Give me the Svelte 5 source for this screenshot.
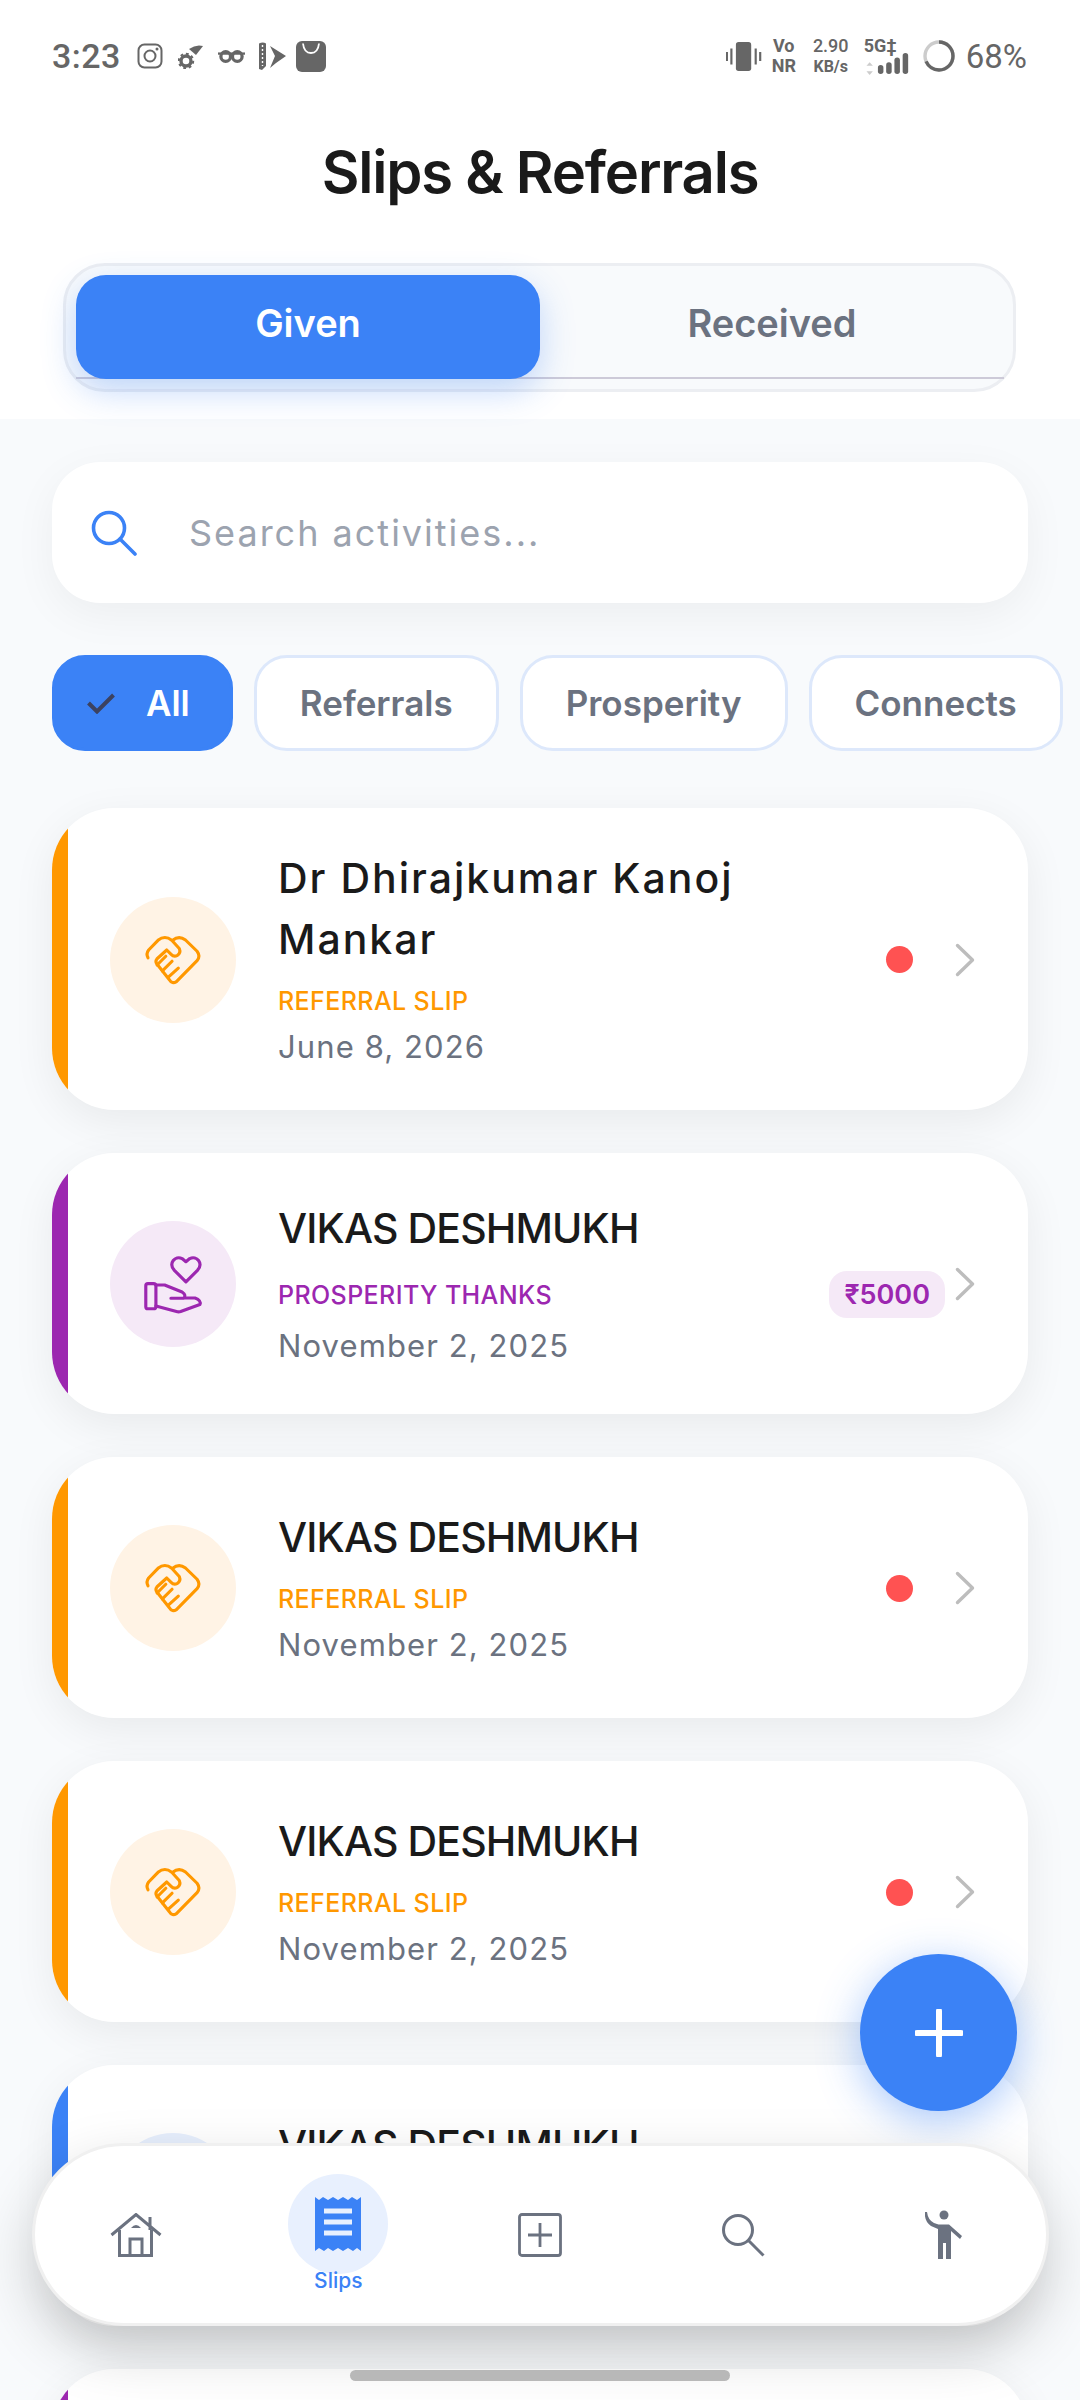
<script>
  const chips = ['Referrals', 'Prosperity', 'Connects'];
  const cards = [
    { name: 'Dr Dhirajkumar Kanoj Mankar', type: 'REFERRAL SLIP', date: 'June 8, 2026', kind: 'ref', mixed: true },
    { name: 'VIKAS DESHMUKH', type: 'PROSPERITY THANKS', date: 'November 2, 2025', kind: 'pro', amount: '₹5000' },
    { name: 'VIKAS DESHMUKH', type: 'REFERRAL SLIP', date: 'November 2, 2025', kind: 'ref' },
    { name: 'VIKAS DESHMUKH', type: 'REFERRAL SLIP', date: 'November 2, 2025', kind: 'ref' },
    { name: 'VIKAS DESHMUKH', type: 'CONNECT', date: 'November 2, 2025', kind: 'con' },
    { name: '', type: '', date: '', kind: 'pro' }
  ];
</script>

<div class="screen">
  <header class="head">
    <div class="status">
      <div class="st-left">
        <span class="time">3:23</span>
        <svg class="s-insta" viewBox="0 0 26 26"><rect x="1.500" y="1.500" width="23" height="23" rx="6" fill="none" stroke="#666" stroke-width="2"/><circle cx="13" cy="13" r="5.500" fill="none" stroke="#666" stroke-width="2"/><circle cx="20" cy="6" r="1.500" fill="#666"/></svg>
        <svg class="s-gear" viewBox="0 0 26 26"><path d="M11 6 Q18 1 25 3 L18 12 Z" fill="#666"/><circle cx="8" cy="18" r="5" fill="none" stroke="#666" stroke-width="3.400"/><circle cx="8" cy="18" r="7.200" fill="none" stroke="#666" stroke-width="2" stroke-dasharray="2.800 2.800"/></svg>
        <svg class="s-glass" viewBox="0 0 28 14"><circle cx="8" cy="7.500" r="5" fill="none" stroke="#666" stroke-width="3.400"/><circle cx="20" cy="7.500" r="5" fill="none" stroke="#666" stroke-width="3.400"/><path d="M0 4.500h28" stroke="#666" stroke-width="2.400"/></svg>
        <svg class="s-book" viewBox="0 0 27 28"><path d="M0 1.500Q4-.5 7 1.500V24L3 28 0 27Z" fill="#666"/><path d="M3.500 3v21" stroke="#fff" stroke-width="1.400" stroke-dasharray="2 2"/><path d="M11 4 27 14 17 21 11 26 16 14Z" fill="#666"/></svg>
        <svg class="s-bag" viewBox="0 0 30 31"><rect width="30" height="31" rx="6" fill="#666"/><path d="M7 2.500Q8 12 15 12T23 2.500" fill="none" stroke="#fff" stroke-width="1.800"/></svg>
      </div>
      <div class="st-right">
        <svg class="s-vib" viewBox="0 0 40 34"><rect x="11" y="1" width="17" height="32" rx="3" fill="#666"/><path d="M1 12v10M6 8v18M33 8v18M38 12v10" stroke="#666" stroke-width="2.400"/></svg>
        <span class="tiny vo">Vo<br />NR</span>
        <span class="tiny speed"><b>2.90</b><br />KB/s</span>
        <div class="net">
          <span class="tiny fiveg">5G‡</span>
          <svg class="s-sig" viewBox="0 0 48 24"><path d="M4 10l3.500 4H.5zM4 24l3.500-4H.5z" fill="#ccc"/><rect x="13" y="13" width="6" height="10" rx="3" fill="#666"/><rect x="22" y="10" width="6" height="13" rx="3" fill="#666"/><rect x="31" y="5" width="6" height="18" rx="3" fill="#666"/><rect x="40" y="0" width="6" height="23" rx="3" fill="#666"/></svg>
        </div>
        <svg class="s-ring" viewBox="0 0 32 32"><circle cx="16" cy="16" r="14" fill="none" stroke="#ccc" stroke-width="3.400"/><circle cx="16" cy="16" r="14" fill="none" stroke="#666" stroke-width="3.400" stroke-dasharray="60 88" transform="rotate(-90 16 16)"/></svg>
        <span class="pct">68%</span>
      </div>
    </div>

    <h1>Slips &amp; Referrals</h1>

    <div class="tabs">
      <div class="tabrow">
        <button class="tab on">Given</button>
        <button class="tab">Received</button>
      </div>
    </div>
  </header>

  <main class="body">
    <div class="search">
      <svg class="search-ic" viewBox="0 0 46 46"><circle cx="18" cy="18" r="15.500" fill="none" stroke="#3b82f6" stroke-width="3.600"/><path d="M29 29 44 44" stroke="#3b82f6" stroke-width="3.600" stroke-linecap="round"/></svg>
      <span class="ph">Search activities...</span>
    </div>

    <div class="chips">
      <button class="chip active">
        <svg class="check" viewBox="0 0 28 22"><path d="M1.500 11 10 19.500 26.500 3" fill="none" stroke="#3c4260" stroke-width="4"/></svg>
        All
      </button>
      {#each chips as c}
        <button class="chip">{c}</button>
      {/each}
    </div>

    <div class="list">
      {#each cards as c}
        <article class="card {c.kind}">
          <div class="disc">
            {#if c.kind === 'pro'}
              <svg class="ic" viewBox="160 165 172 172" fill="none" stroke="currentColor" stroke-width="9" stroke-linecap="round" stroke-linejoin="round">
                <path d="M283 245 250 212C232 192 252 168 272 178 L283 187 294 178C314 168 334 192 316 212Z"/>
                <path d="M168 256Q168 250 174 250H190Q197 250 197 256V316Q197 322 190 322H174Q168 322 168 316Z"/>
                <path d="M197 254H222L272 274Q286 284 276 292H240M276 291 309 291Q328 298 323 310L268 330Q262 332 256 330L197 314"/>
              </svg>
            {:else if c.kind === 'ref'}
              <svg class="ic" viewBox="155 150 192 172" fill="none" stroke="currentColor" stroke-width="10" stroke-linecap="round" stroke-linejoin="round">
                <path d="M171 229Q164 216 173 204L203 173Q225 155 247 173L271 199Q277 214 265 221 254 227 245 218L231 204 200 232Q192 242 202 252L240 300Q248 314 262 305L328 238Q340 224 328 208L291 172Q270 156 250 173"/>
                <path d="M217 271 248 240M237 290 268 262M200 252 228 224"/>
              </svg>
            {:else}
              <svg class="ic" viewBox="0 0 24 24" fill="none" stroke="currentColor" stroke-width="1.400"><circle cx="12" cy="12" r="8"/></svg>
            {/if}
          </div>
          {#if c.name}
            <div class="text">
              <div class="name" class:mixed={c.mixed}>{c.name}</div>
              <div class="type">{c.type}</div>
              <div class="date">{c.date}</div>
            </div>
            <div class="end">
              {#if c.amount}
                <span class="amt">{c.amount}</span>
              {:else}
                <span class="dot"></span>
              {/if}
              <svg class="chev" viewBox="0 0 20 34"><path d="M2.500 2.500 17.500 17 2.500 31.500" fill="none" stroke="#bdbdbd" stroke-width="3.400" stroke-linecap="round" stroke-linejoin="round"/></svg>
            </div>
          {/if}
        </article>
      {/each}
    </div>
  </main>

  <button class="fab" aria-label="Add">
    <svg viewBox="0 0 48 48"><path d="M24 2v44M2 24h44" stroke="#fff" stroke-width="6" stroke-linecap="round"/></svg>
  </button>

  <nav class="nav">
    <div class="nav-item">
      <svg class="n-home" viewBox="0 0 52 44" fill="none" stroke="#6b7280" stroke-width="3">
        <path d="M1.500 22 26 1.500 50.500 22M40 4v13M9.500 17v25.500H41.500V17M20 42.500V26H32V42.500"/>
        <path d="M21 15Q26 9 31 15Z" fill="#6b7280" stroke="none"/>
      </svg>
    </div>
    <div class="nav-item cur">
      <div class="halo">
        <svg class="n-slip" viewBox="0 0 46 54">
          <path d="M0 0l4 3 4-3 5 3 5-3 5 3 5-3 5 3 4-3 5 3 4-3V54l-4-3-4 3-5-3-5 3-5-3-5 3-5-3-4 3-5-3-4 3Z" fill="#3b82f6"/>
          <path d="M9 14H37M9 25H37M9 36H37" stroke="#e8f0fe" stroke-width="5"/>
        </svg>
      </div>
      <span class="slbl">Slips</span>
    </div>
    <div class="nav-item">
      <svg class="n-add" viewBox="0 0 44 44" fill="none" stroke="#6b7280" stroke-width="2.800"><rect x="1.500" y="1.500" width="41" height="41" rx="2.500"/><path d="M22 10V34M10 22H34"/></svg>
    </div>
    <div class="nav-item">
      <svg class="n-find" viewBox="0 0 44 44" fill="none" stroke="#6b7280" stroke-width="3"><circle cx="17" cy="17" r="14.500"/><path d="M27.500 27.500 42.500 42.500"/></svg>
    </div>
    <div class="nav-item">
      <svg class="n-man" viewBox="0 0 40 50">
        <circle cx="19" cy="5" r="4.500" fill="#6b7280"/>
        <path d="M2 2Q3 10 9 13L13.500 14.500H24L37 26 35 29 26 21V49H21V33H18V49H13V19L6 16Q-1 11 0 2Z" fill="#6b7280"/>
      </svg>
    </div>
  </nav>

  <div class="home-bar"></div>
</div>

<style>
  :global(body) { margin: 0; background: #f8fafc; }
  .screen {
    position: relative;
    width: 1080px;
    height: 2400px;
    overflow: hidden;
    background: #f8fafc;
    font-family: Inter, "Noto Sans", sans-serif;
  }
  .head { background: #fff; height: 419px; box-sizing: border-box; position: relative; }
  .status {
    height: 112px;
    box-sizing: border-box;
    padding: 0 53px 0 52px;
    display: flex;
    justify-content: space-between;
    align-items: center;
    color: #666;
    font-family: Roboto, sans-serif;
  }
  .st-left, .st-right { display: flex; align-items: center; }
  .time { font-size: 34px; font-weight: 500; letter-spacing: .5px; width: 85px; }
  .s-insta { width: 26px; height: 26px; }
  .s-gear { width: 26px; height: 26px; margin-left: 15px; }
  .s-glass { width: 27px; height: 14px; margin-left: 14px; }
  .s-book { width: 27px; height: 28px; margin-left: 14px; }
  .s-bag { width: 30px; height: 31px; margin-left: 10px; }
  .s-vib { width: 36px; height: 33px; }
  .tiny { font-size: 18px; font-weight: 700; line-height: 20px; text-align: center; color: #666; }
  .vo { margin-left: 10px; width: 24px; }
  .speed { margin-left: 17px; width: 36px; font-size: 16px; }
  .speed b { font-size: 18px; font-weight: 500; }
  .net { margin-left: 15px; width: 48px; position: relative; height: 34px; }
  .fiveg { position: absolute; left: 0; top: -3px; font-size: 18px; white-space: nowrap; }
  .s-sig { position: absolute; left: 0; top: 14px; width: 48px; height: 22px; }
  .s-ring { width: 32px; height: 32px; margin-left: 11px; }
  .pct { font-size: 33px; margin-left: 11px; font-weight: 400; }

  h1 {
    margin: 0;
    height: 120px;
    line-height: 120px;
    text-align: center;
    font-size: 58px;
    font-weight: 600;
    letter-spacing: -1.2px;
    color: #1a1a1a;
  }
  .tabs {
    margin: 31px 64px 0 63px;
    height: 129px;
    box-sizing: border-box;
    padding: 9px 9px 10px 10px;
    border: 3px solid #eceef2;
    border-radius: 42px;
    background: #f8fafc;
  }
  .tabrow { display: flex; height: 104px; border-bottom: 2px solid #cdcad8; box-sizing: border-box; }
  .tab {
    flex: 1;
    height: 104px;
    border: 0;
    background: transparent;
    border-radius: 30px;
    font: 600 38px Inter, sans-serif;
    color: #6b7280;
    padding: 0 0 8px;
  }
  .tab.on { background: #3b82f6; color: #fff; box-shadow: 0 12px 34px rgba(59,130,246,.3); }

  .body { padding: 43px 52px 0; }
  .search {
    height: 141px;
    background: #fff;
    border-radius: 48px;
    box-shadow: 0 12px 44px rgba(0,0,0,.05);
    display: flex;
    align-items: center;
    padding-left: 39px;
  }
  .search-ic { width: 46px; height: 46px; flex: none; }
  .ph { margin-left: 52px; font-size: 36px; color: #9ca3af; letter-spacing: 2px; }

  .chips { display: flex; gap: 21px; margin-top: 52px; width: 1100px; }
  .chip {
    height: 96px;
    box-sizing: border-box;
    padding: 0 43px;
    background: #fff;
    border: 3px solid #dde8fb;
    border-radius: 33px;
    font: 600 35px Inter, sans-serif;
    color: #6b7280;
    white-space: nowrap;
  }
  .chip.active {
    background: #3b82f6;
    border-color: #3b82f6;
    color: #fff;
    padding: 0 40px 0 32px;
    display: flex;
    align-items: center;
    gap: 31px;
  }
  .check { width: 28px; height: 22px; }

  .list { margin-top: 57px; display: flex; flex-direction: column; gap: 43px; }
  .card {
    position: relative;
    overflow: hidden;
    min-height: 261px;
    box-sizing: border-box;
    padding: 40px 53px 39px 58px;
    background: #fff;
    border-radius: 62px;
    display: flex;
    align-items: center;
    box-shadow: 0 12px 44px rgba(0,0,0,.065);
    flex: none;
  }
  .card::before {
    content: "";
    position: absolute;
    left: 0;
    top: 0;
    bottom: 0;
    width: 16px;
    background: var(--accent);
  }
  .ref { --accent: #ff9800; --soft: #fff3e5; }
  .pro { --accent: #9c27b0; --soft: #f5e9f7; }
  .con { --accent: #3b82f6; --soft: #e7effd; }
  .disc {
    width: 126px;
    height: 126px;
    flex: none;
    border-radius: 50%;
    background: var(--soft);
    color: var(--accent);
    display: flex;
    align-items: center;
    justify-content: center;
  }
  .ic { width: 60px; height: 60px; }
  .text { flex: 1; margin-left: 42px; min-width: 0; }
  .name { font-size: 41px; line-height: 61px; font-weight: 500; color: #1a1a1a; letter-spacing: -.85px; max-width: 500px; }
  .name.mixed { letter-spacing: 2px; }
  .type { margin-top: 12px; font-size: 25px; line-height: 39px; font-weight: 500; color: var(--accent); letter-spacing: .4px; }
  .date { margin-top: 2px; font-size: 31px; line-height: 48px; color: #6b7280; letter-spacing: 1.1px; }
  .pro .type { margin-top: 17px; }
  .pro .date { margin-top: 7px; }
  .end { display: flex; align-items: center; flex: none; }
  .dot { width: 27px; height: 27px; border-radius: 50%; background: #ff5252; margin-right: 42px; }
  .chev { width: 20px; height: 34px; }
  .amt {
    height: 47px;
    line-height: 47px;
    padding: 0 15px;
    margin: 20px 10px 0 0;
    background: #f5e9f7;
    color: #9c27b0;
    border-radius: 18px;
    font-size: 27px;
    font-weight: 600;
  }

  .fab {
    position: absolute;
    left: 860px;
    top: 1954px;
    width: 157px;
    height: 157px;
    border: 0;
    border-radius: 50%;
    padding: 0;
    background: #3b82f6;
    box-shadow: 0 10px 44px rgba(59,130,246,.45);
    display: flex;
    align-items: center;
    justify-content: center;
  }
  .fab svg { width: 48px; height: 48px; }

  .nav {
    position: absolute;
    left: 32px;
    top: 2143px;
    width: 1017px;
    height: 183px;
    box-sizing: border-box;
    background: #fff;
    border: 3px solid #f0f0f0;
    border-radius: 92px;
    box-shadow: 0 24px 60px rgba(0,0,0,.18);
    display: grid;
    grid-template-columns: 1fr 1fr 1fr 1fr 1fr;
  }
  .nav-item { display: flex; flex-direction: column; align-items: center; justify-content: center; }
  .nav-item.cur { justify-content: flex-start; padding-top: 28px; }
  .halo {
    width: 100px;
    height: 100px;
    border-radius: 50%;
    background: #e8f0fe;
    display: flex;
    align-items: center;
    justify-content: center;
  }
  .n-home { width: 52px; height: 44px; }
  .n-slip { width: 46px; height: 54px; }
  .n-add { width: 44px; height: 44px; }
  .n-find { width: 44px; height: 44px; }
  .n-man { width: 40px; height: 50px; }
  .slbl { margin-top: -8px; font-size: 21px; line-height: 30px; color: #3b82f6; font-weight: 500; }

  .home-bar {
    position: absolute;
    left: 350px;
    top: 2370px;
    width: 380px;
    height: 11px;
    border-radius: 6px;
    background: #b8b8b8;
  }
</style>
